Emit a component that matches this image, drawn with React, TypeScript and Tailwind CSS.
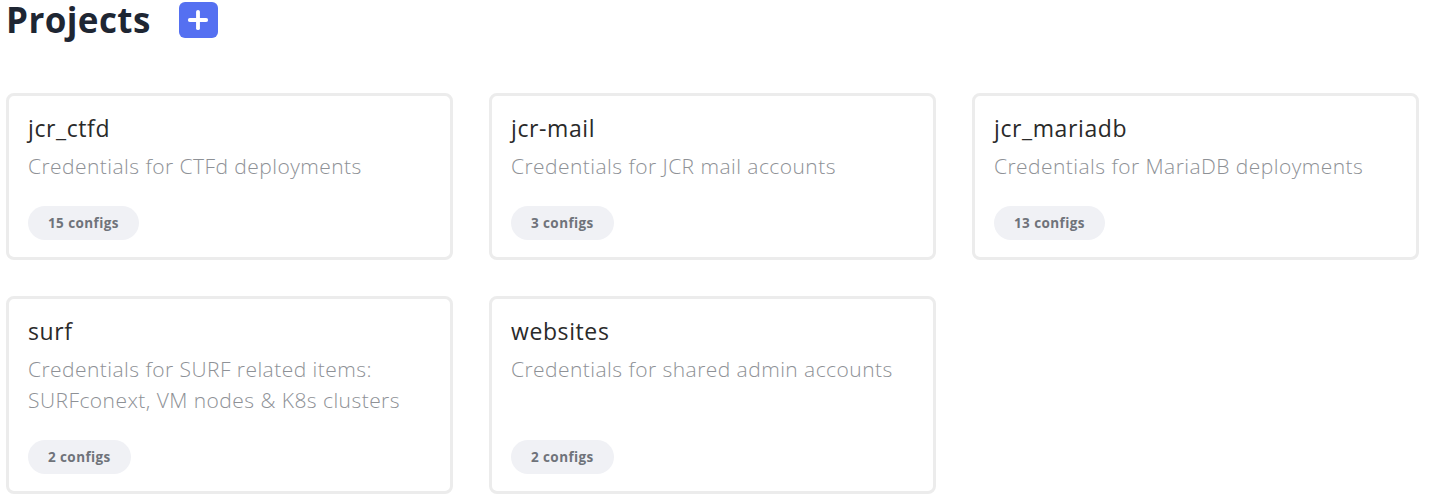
import { Plus } from "lucide-react";

type Project = {
  name: string;
  description: string;
  configs: number;
};

const projects: Project[] = [
  { name: "jcr_ctfd", description: "Credentials for CTFd deployments", configs: 15 },
  { name: "jcr-mail", description: "Credentials for JCR mail accounts", configs: 3 },
  { name: "jcr_mariadb", description: "Credentials for MariaDB deployments", configs: 13 },
  {
    name: "surf",
    description: "Credentials for SURF related items: SURFconext, VM nodes & K8s clusters",
    configs: 2,
  },
  { name: "websites", description: "Credentials for shared admin accounts", configs: 2 },
];

function ProjectCard({ name, description, configs }: Project) {
  return (
    <div className="flex flex-col rounded-lg border-[3px] border-[#ececec] bg-white px-[19px] pt-[17px] pb-[17px]">
      <h2 className="text-[23px] leading-[30px] tracking-[0.6px] text-[#2a2a2a]">{name}</h2>
      <p className="mt-[8px] text-[21px] leading-[31px] font-light tracking-[0.45px] text-[#8e9196]">
        {description}
      </p>
      <div className="mt-auto pt-[24px]">
        <span className="inline-flex h-[34px] items-center rounded-full bg-[#f0f1f5] px-[20px] text-[13.5px] font-bold tracking-[0.4px] text-[#6f737a]">
          {configs} configs
        </span>
      </div>
    </div>
  );
}

export default function App() {
  return (
    <div className="min-h-screen bg-white pl-1.5 pr-[25px] font-['Open_Sans',sans-serif]">
      {/* Header */}
      <div className="flex h-10 items-center">
        <h1 className="text-[35px] leading-[40px] font-bold tracking-[0.4px] text-[#1e2633]">Projects</h1>
        <button className="ml-[28px] flex h-9 w-[39px] items-center justify-center rounded-md bg-[#5570f1] text-white">
          <Plus size={28} strokeWidth={3.3} />
        </button>
      </div>

      {/* Project grid */}
      <div className="mt-[53px] grid grid-cols-3 gap-9">
        {projects.map((p) => (
          <ProjectCard key={p.name} {...p} />
        ))}
      </div>
    </div>
  );
}
